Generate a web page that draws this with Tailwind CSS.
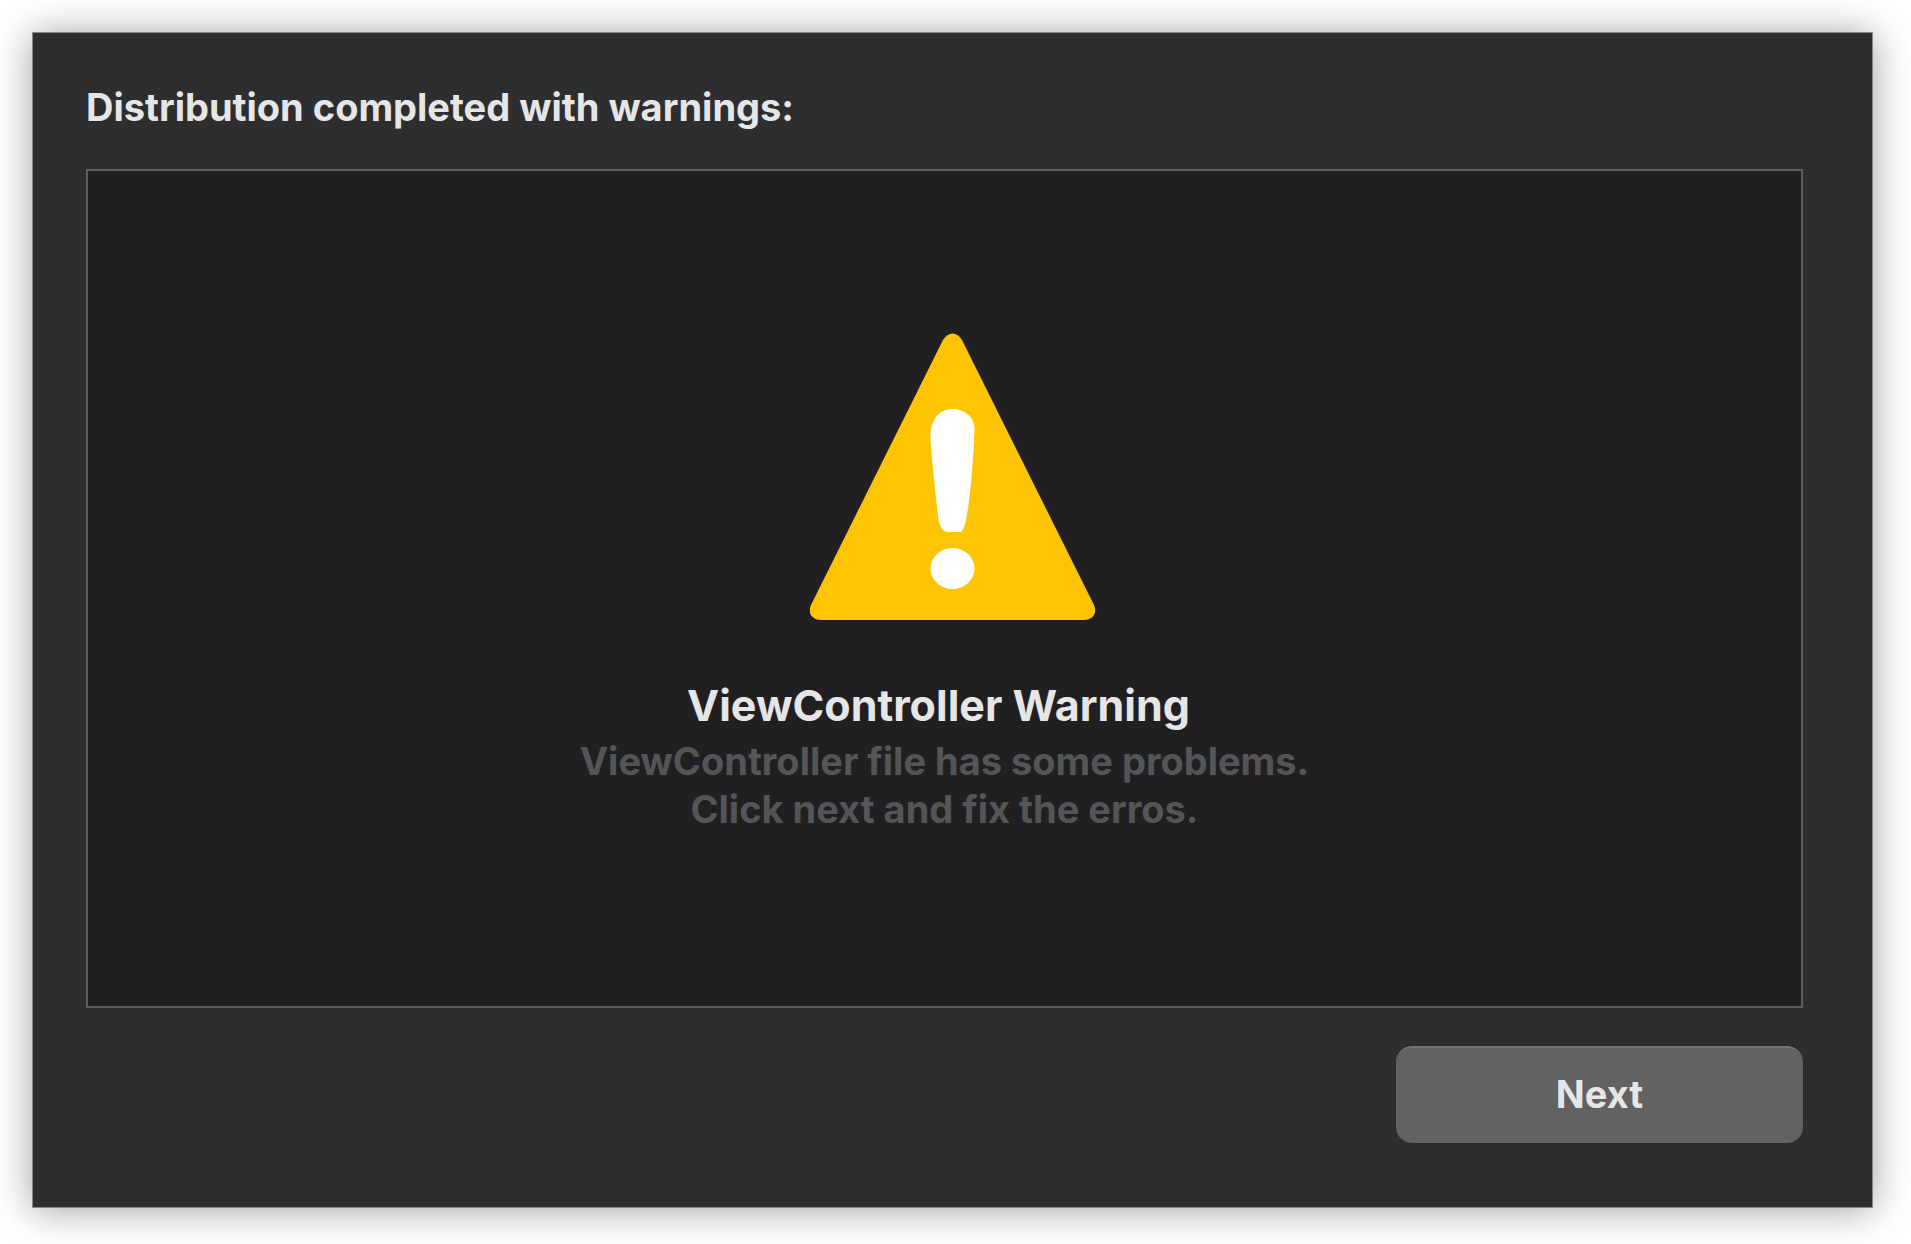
<!DOCTYPE html>
<html lang="en">
<head>
<meta charset="utf-8">
<title>Distribution warnings</title>
<script src="https://cdn.jsdelivr.net/npm/@tailwindcss/browser@4"></script>
</head>
<body class="flex min-h-screen bg-white pt-8 pr-[38px] pb-9 pl-8 font-['Inter',sans-serif] font-bold text-[#e6e6e6]">
<main class="flex flex-1 flex-col border border-[#858788] bg-[#2d2e30] pt-[50px] pr-[69px] pb-16 pl-[53px] shadow-[0_2px_36px_rgba(0,0,0,0.38)]">
  <h1 class="text-[38px] leading-12">Distribution completed with warnings:</h1>
  <section class="mt-[38px] flex flex-1 flex-col items-center justify-center border-2 border-[#5d5d5f] bg-[#202022] pb-3 text-center">
    <div class="pl-4">
      <svg class="block h-[288px] w-[286px]" viewBox="0 0 286 288" aria-hidden="true">
        <path d="M133 7Q137 .5 142.500 .5T152 7L284 272C287.500 280 283 287 274 287H11C2 287 -2.500 280 1 272Z" fill="#ffc505"/>
        <path d="M142.500 76C154 76 165 84 164.500 97Q162 155 156 187Q154 196 151 199H137Q131 199 128.500 187Q124 150 120.500 108C119 87 129 76 142.500 76Z" fill="#fff"/>
        <ellipse cx="142.500" cy="235.500" rx="22" ry="20.500" fill="#fff"/>
      </svg>
    </div>
    <h2 class="mt-14 pr-3 text-[43px] leading-14">ViewController Warning</h2>
    <p class="mt-1 text-[38px] leading-12 text-[#555557]">ViewController file has some problems.<br>Click next and fix the erros.</p>
  </section>
  <button type="button" class="mt-[38px] h-[97px] w-[407px] self-end rounded-2xl border-t-2 border-[#757577] bg-[#626262] pb-1 text-[38px] leading-12">Next</button>
</main>
</body>
</html>
